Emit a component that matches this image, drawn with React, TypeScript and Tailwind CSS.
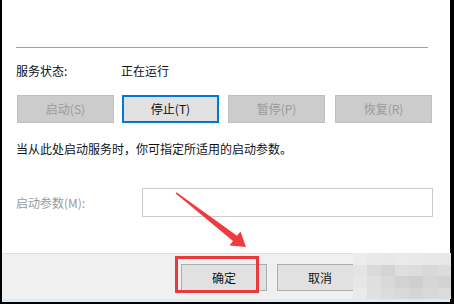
import React from 'react';

const font = { fontFamily: '"Microsoft YaHei", "Noto Sans CJK SC", "Noto Sans", sans-serif' };

const mosaic = [
  ['#ececec', '#e9e9e9', '#e8e8e8', '#eaeaea', '#e9e9e9', '#e8e8e8', '#e7e7e7'],
  ['#e4e4e4', '#dadada', '#d4d4d4', '#dedede', '#dcdcdc', '#d8d8d8', '#dcdcdc'],
  ['#e6e6e6', '#dfdfdf', '#d9d9d9', '#d2d2d2', '#cfcfcf', '#d6d6d6', '#d3d3d3'],
  ['#eaeaea', '#e0e0e0', '#dcdcdc', '#d9d9d9', '#d5d5d5', '#d8d8d8', '#dbdbdb'],
];

const GrayButton: React.FC<{ label: string }> = ({ label }) => (
  <div className="w-[97px] h-[28px] flex items-center justify-center bg-[#cccccc] border border-[#bfbfbf] text-[12px] text-[#9a9a9a]">
    {label}
  </div>
);

export default function App() {
  return (
    <div className="w-[454px] h-[304px] bg-black pl-[2px] pr-[4px] pb-[2px] overflow-hidden" style={font}>
      <div className="relative w-full h-full bg-white flex flex-col">
        <div className="flex-1 pl-[14px] pt-[47px]">
          <div className="w-[412px] h-px bg-[#a0a0a0]" />

          <div className="mt-[15px] flex h-[16px] items-center text-[12px] text-[#111]">
            <span className="w-[105px]">服务状态:</span>
            <span>正在运行</span>
          </div>

          <div className="mt-[16px] flex pl-[1px] gap-[8px]">
            <GrayButton label="启动(S)" />
            <div className="w-[97px] h-[28px] flex items-center justify-center bg-[#e1e1e1] border-2 border-[#0078d7] text-[12px] text-[#111]">
              停止(T)
            </div>
            <div className="ml-[1px]"><GrayButton label="暂停(P)" /></div>
            <div className="ml-[2px]"><GrayButton label="恢复(R)" /></div>
          </div>

          <div className="mt-[18px] h-[16px] flex items-center text-[12px] text-[#111]">
            当从此处启动服务时，你可指定所适用的启动参数。
          </div>

          <div className="mt-[31px] flex items-center">
            <span className="w-[126px] text-[12px] text-[#9a9a9a]">启动参数(M):</span>
            <div className="w-[291px] h-[29px] border border-[#cccccc] bg-white" />
          </div>
        </div>

        <div className="h-[46px] bg-[#f0f0f0] border-t border-[#dfdfdf] flex pt-[10px] pl-[179px] gap-[10px]">
          <div className="w-[86px] h-[27px] flex items-center justify-center bg-[#e1e1e1] border border-[#adadad] text-[12px] text-[#111]">
            确定
          </div>
          <div className="w-[86px] h-[27px] flex items-center justify-center bg-[#e1e1e1] border border-[#adadad] text-[12px] text-[#111]">
            取消
          </div>
        </div>
        <div className="h-[3px] bg-[#dcecf7]" />

        {/* pixelated blur over the corner */}
        <div className="absolute left-[351px] top-[253px] w-[98px] h-[46px] grid grid-cols-7 grid-rows-4">
          {mosaic.flat().map((c, i) => (
            <div key={i} style={{ backgroundColor: c }} />
          ))}
        </div>

        {/* red highlight box */}
        <div className="absolute left-[173px] top-[256px] w-[84px] h-[37px] border-[3px] border-[#e8393c]" />

        {/* red arrow */}
        <svg className="absolute left-0 top-0" width="448" height="302" viewBox="0 0 448 302">
          <polygon
            points="174.5,192.3 235,235.7 238.5,231.5 244,247 227.5,245.5 231,241 173.7,193.6"
            fill="#ef3b3f"
          />
        </svg>
      </div>
    </div>
  );
}
